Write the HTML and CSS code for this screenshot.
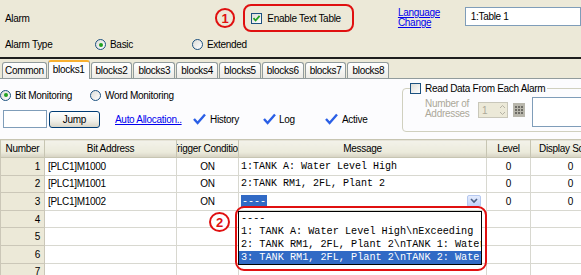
FILE: index.html
```html
<!DOCTYPE html>
<html lang="en">
<head>
    <meta charset="UTF-8">
    <title>Alarm Settings</title>
    <link rel="stylesheet" href="styles.css">
</head>
<body>
    <div class="top">
        <div class="top-row">
            <span class="caption">Alarm</span>
            <span class="badge">1</span>
            <label class="callout">
                <span class="box">
                    <svg width="9" height="9" viewBox="0 0 9 9"><path d="M1.5 4.2 L3.6 6.5 L7.6 1.8" fill="none" stroke="#21a121" stroke-width="1.8"/></svg>
                </span>
                Enable Text Table
            </label>
            <a class="link lang" href="#">Language<br>Change</a>
            <div class="textbox">1:Table 1</div>
        </div>
        <div class="top-row second">
            <span class="caption wide">Alarm Type</span>
            <label class="opt basic"><span class="radio on"></span>Basic</label>
            <label class="opt"><span class="radio"></span>Extended</label>
        </div>
    </div>

    <div class="tabs">
        <span class="tab first">Common</span>
        <span class="tab active">blocks1</span>
        <span class="tab">blocks2</span>
        <span class="tab">blocks3</span>
        <span class="tab">blocks4</span>
        <span class="tab">blocks5</span>
        <span class="tab">blocks6</span>
        <span class="tab">blocks7</span>
        <span class="tab">blocks8</span>
    </div>

    <div class="page">
        <div class="left">
            <div class="mode-row">
                <label class="opt bit"><span class="radio on"></span>Bit Monitoring</label>
                <label class="opt"><span class="radio"></span>Word Monitoring</label>
            </div>
            <div class="tool-row">
                <span class="field"></span>
                <span class="button">Jump</span>
                <a class="link auto" href="#">Auto Allocation..</a>
                <span class="tick history"><svg width="13" height="12" viewBox="0 0 13 12"><path d="M1 6 L4.6 10 L12 1.5" fill="none" stroke="#2a5fe6" stroke-width="2.4"/></svg>History</span>
                <span class="tick log"><svg width="13" height="12" viewBox="0 0 13 12"><path d="M1 6 L4.6 10 L12 1.5" fill="none" stroke="#2a5fe6" stroke-width="2.4"/></svg>Log</span>
                <span class="tick"><svg width="13" height="12" viewBox="0 0 13 12"><path d="M1 6 L4.6 10 L12 1.5" fill="none" stroke="#2a5fe6" stroke-width="2.4"/></svg>Active</span>
            </div>
        </div>
        <fieldset class="group">
            <legend><span class="box"></span>Read Data From Each Alarm</legend>
            <div class="group-row">
                <span class="muted">Number of<br>Addresses</span>
                <span class="spin">
                    <span>1</span>
                    <svg width="9" height="14" viewBox="0 0 9 14"><path d="M2 5 L4.5 2.5 L7 5" fill="none" stroke="#b5b2a5" stroke-width="1"/><path d="M2 9 L4.5 11.5 L7 9" fill="none" stroke="#b5b2a5" stroke-width="1"/></svg>
                </span>
                <span class="grid-btn">
                    <svg width="12" height="14" viewBox="0 0 12 14"><rect x="0" y="0" width="12" height="14" fill="#b8b6ac"/><g fill="#6e6c66"><rect x="2" y="3" width="2" height="2"/><rect x="5" y="3" width="2" height="2"/><rect x="8" y="3" width="2" height="2"/><rect x="2" y="6" width="2" height="2"/><rect x="5" y="6" width="2" height="2"/><rect x="8" y="6" width="2" height="2"/><rect x="2" y="9" width="2" height="2"/><rect x="5" y="9" width="2" height="2"/><rect x="8" y="9" width="2" height="2"/></g></svg>
                </span>
                <span class="memo"></span>
            </div>
        </fieldset>
    </div>

    <div class="grid-wrap">
        <table class="grid">
            <colgroup>
                <col style="width:44px"><col style="width:132px"><col style="width:62px"><col style="width:248px"><col style="width:44px"><col style="width:80px">
            </colgroup>
            <thead>
                <tr>
                    <th><span>Number</span></th>
                    <th><span>Bit Address</span></th>
                    <th><span>Trigger Condition</span></th>
                    <th><span>Message</span></th>
                    <th><span>Level</span></th>
                    <th><span>Display Screen</span></th>
                </tr>
            </thead>
            <tbody>
                <tr><td class="num">1</td><td>[PLC1]M1000</td><td class="mid">ON</td><td class="msg">1:TANK A: Water Level High</td><td class="mid">0</td><td class="mid">0</td></tr>
                <tr><td class="num">2</td><td>[PLC1]M1001</td><td class="mid">ON</td><td class="msg">2:TANK RM1, 2FL, Plant 2</td><td class="mid">0</td><td class="mid">0</td></tr>
                <tr><td class="num">3</td><td>[PLC1]M1002</td><td class="mid">ON</td>
                    <td class="msg edit"><span class="sel">----</span><span class="drop"><svg width="8" height="6" viewBox="0 0 8 6"><path d="M1 1 L4 4 L7 1" fill="none" stroke="#4d6185" stroke-width="1.6"/></svg></span></td>
                    <td class="mid">0</td><td class="mid">0</td></tr>
                <tr><td class="num">4</td><td></td><td></td><td></td><td></td><td></td></tr>
                <tr><td class="num">5</td><td></td><td></td><td></td><td></td><td></td></tr>
                <tr><td class="num">6</td><td></td><td></td><td></td><td></td><td></td></tr>
                <tr><td class="num">7</td><td></td><td></td><td></td><td></td><td></td></tr>
            </tbody>
        </table>

        <!-- annotation over the open dropdown -->
        <span class="badge two">2</span>
        <div class="callout-list">
            <ul class="list">
                <li>----</li>
                <li>1: TANK A: Water Level High\nExceeding</li>
                <li>2: TANK RM1, 2FL, Plant 2\nTANK 1: Water</li>
                <li class="picked">3: TANK RM1, 2FL, Plant 2\nTANK 2: Water</li>
            </ul>
        </div>
    </div>
</body>
</html>
```

FILE: styles.css
```css
* {
    margin: 0;
    padding: 0;
    box-sizing: border-box;
}

body {
    width: 581px;
    height: 275px;
    overflow: hidden;
    background-color: #ece9d8;
    font-family: "Liberation Sans", Arial, sans-serif;
    font-size: 10px;
    letter-spacing: -0.3px;
    color: #000;
}

/* Top settings */
.top {
    height: 57px;
    padding-top: 4px;
}

.top-row {
    display: flex;
    align-items: center;
    height: 28px;
}

.top-row.second {
    height: 13px;
    margin-top: 6px;
}

.caption {
    width: 222px;
    padding-left: 5px;
}

.caption.wide {
    width: 95px;
}

.badge {
    width: 21px;
    height: 20px;
    border: 2px solid #e01010;
    border-radius: 50%;
    color: #e01010;
    font-size: 13px;
    font-weight: bold;
    display: flex;
    align-items: center;
    justify-content: center;
    letter-spacing: 0;
}

.callout {
    display: flex;
    align-items: center;
    gap: 5px;
    width: 114px;
    height: 28px;
    margin-left: 8px;
    padding-left: 6px;
    border: 2px solid #e01010;
    border-radius: 8px;
}

.box {
    width: 11px;
    height: 11px;
    border: 1px solid #1c5180;
    background: linear-gradient(135deg, #dcdcd7, #fff);
    display: inline-flex;
    align-items: center;
    justify-content: center;
    flex-shrink: 0;
}

.link {
    color: #0000ee;
    text-decoration: underline;
}

.lang {
    width: 69px;
    margin-left: 44px;
    line-height: 10px;
}

.textbox {
    width: 120px;
    height: 19px;
    margin-top: -3px;
    border: 1px solid #7f9db9;
    background-color: #fff;
    padding: 3px 0 0 5px;
}

.opt {
    display: flex;
    align-items: center;
    gap: 4px;
}

.opt.basic {
    width: 97px;
}

.radio {
    width: 11px;
    height: 11px;
    border: 1px solid #1c5180;
    border-radius: 50%;
    background: linear-gradient(135deg, #dcdcd7, #fff);
    display: inline-flex;
    align-items: center;
    justify-content: center;
    flex-shrink: 0;
}

.radio.on::after {
    content: "";
    width: 4px;
    height: 4px;
    border-radius: 50%;
    background-color: #21a121;
}

/* Tabs */
.tabs {
    display: flex;
    align-items: flex-end;
    gap: 1px;
    height: 22px;
    padding-left: 2px;
    border-top: 2px solid #1e1e1e;
    border-bottom: 1px solid #919b9c;
}

.tab {
    height: 16px;
    padding: 0 4px;
    line-height: 15px;
    border: 1px solid #919b9c;
    border-bottom: none;
    border-radius: 3px 3px 0 0;
    background: linear-gradient(#fff, #ecebe6);
}

.tab.first {
    padding: 0 2px;
}

.tab.active {
    height: 19px;
    margin-bottom: -1px;
    line-height: 16px;
    border-top: 2px solid #f8b030;
    background: #fcfcfe;
}

/* Page contents */
.page {
    display: flex;
    height: 60px;
    background-color: #fcfcfe;
}

.left {
    width: 402px;
    flex-shrink: 0;
}

.mode-row {
    display: flex;
    align-items: center;
    height: 12px;
    margin-top: 10px;
}

.opt.bit {
    width: 90px;
}

.tool-row {
    display: flex;
    align-items: center;
    height: 18px;
    margin-top: 9px;
}

.field {
    width: 44px;
    height: 18px;
    margin-left: 3px;
    border: 1px solid #7f9db9;
    background-color: #fff;
}

.button {
    width: 51px;
    height: 17px;
    margin-left: 2px;
    border: 1px solid #003c74;
    border-radius: 3px;
    background: linear-gradient(#fff, #f0efe8 60%, #d8d5c8);
    display: flex;
    align-items: center;
    justify-content: center;
}

.auto {
    width: 78px;
    margin-left: 15px;
}

.tick {
    display: flex;
    align-items: center;
    gap: 4px;
}

.tick.history {
    width: 70px;
}

.tick.log {
    width: 62px;
    gap: 3px;
}

.group {
    flex-shrink: 0;
    width: 190px;
    height: 49px;
    margin-top: 4px;
    padding-left: 7px;
    border: 1px solid #d0d0bf;
    border-radius: 4px;
}

.group legend {
    display: flex;
    align-items: center;
    gap: 4px;
    padding-right: 2px;
    font-size: 10px;
}

.group-row {
    display: flex;
    align-items: flex-start;
    margin-top: 3px;
}

.muted {
    width: 53px;
    margin-left: 15px;
    margin-top: 2px;
    line-height: 10px;
    color: #aca899;
}

.spin {
    display: flex;
    align-items: center;
    justify-content: space-between;
    width: 30px;
    height: 16px;
    margin-top: 5px;
    padding-left: 3px;
    border: 1px solid #c9c7ba;
    background-color: #ece9d8;
    color: #aca899;
}

.grid-btn {
    display: flex;
    margin-top: 6px;
    margin-left: 5px;
}

.memo {
    width: 60px;
    height: 30px;
    margin-left: 7px;
    border: 1px solid #7f9db9;
    background-color: #fff;
}

/* Grid */
.grid-wrap {
    position: relative;
}

.grid {
    width: 610px;
    table-layout: fixed;
    border-collapse: collapse;
    background-color: #fff;
}

.grid th {
    height: 18px;
    font-weight: normal;
    background: linear-gradient(#f3f2ea, #ebeadb 70%, #d6d2c2);
    border: 1px solid #c7c5b2;
    overflow: hidden;
}

.grid th span {
    display: flex;
    justify-content: center;
    white-space: nowrap;
}

.grid td {
    height: 17.6px;
    padding-left: 3px;
    border: 1px solid #d8d8d0;
    white-space: nowrap;
    overflow: hidden;
}

.grid td.num {
    text-align: right;
    padding-right: 4px;
    background-color: #ece9d8;
    border-color: #cbc7b8;
}

.grid td.mid {
    text-align: center;
    padding-left: 0;
}

.grid td.msg {
    padding-left: 2px;
    font-family: "Liberation Mono", "Courier New", monospace;
    font-size: 10px;
    letter-spacing: 0;
}

.edit {
    position: relative;
}

.sel {
    background-color: #316ac5;
    color: #fff;
    padding: 1px 1px;
}

.drop {
    position: absolute;
    right: 5px;
    top: 2px;
    width: 14px;
    height: 12px;
    border: 1px solid #b5c8f0;
    border-radius: 2px;
    background: linear-gradient(#e4ecfd, #c1d3fb);
    display: flex;
    align-items: center;
    justify-content: center;
}

.badge.two {
    position: absolute;
    left: 209px;
    top: 73px;
    background-color: #fff;
}

.callout-list {
    position: absolute;
    left: 235px;
    top: 67px;
    width: 252px;
    height: 65px;
    border: 2px solid #e01010;
    border-radius: 9px;
    padding: 3px 0 0 1px;
}

.list {
    list-style: none;
    width: 244px;
    height: 54px;
    border: 1px solid #000;
    background-color: #fff;
    overflow: hidden;
    font-family: "Liberation Mono", "Courier New", monospace;
    font-size: 10.2px;
    letter-spacing: 0;
}

.list li {
    height: 13px;
    line-height: 13px;
    padding-left: 2px;
    white-space: pre;
}

.list li.picked {
    background-color: #316ac5;
    color: #fff;
}
```
